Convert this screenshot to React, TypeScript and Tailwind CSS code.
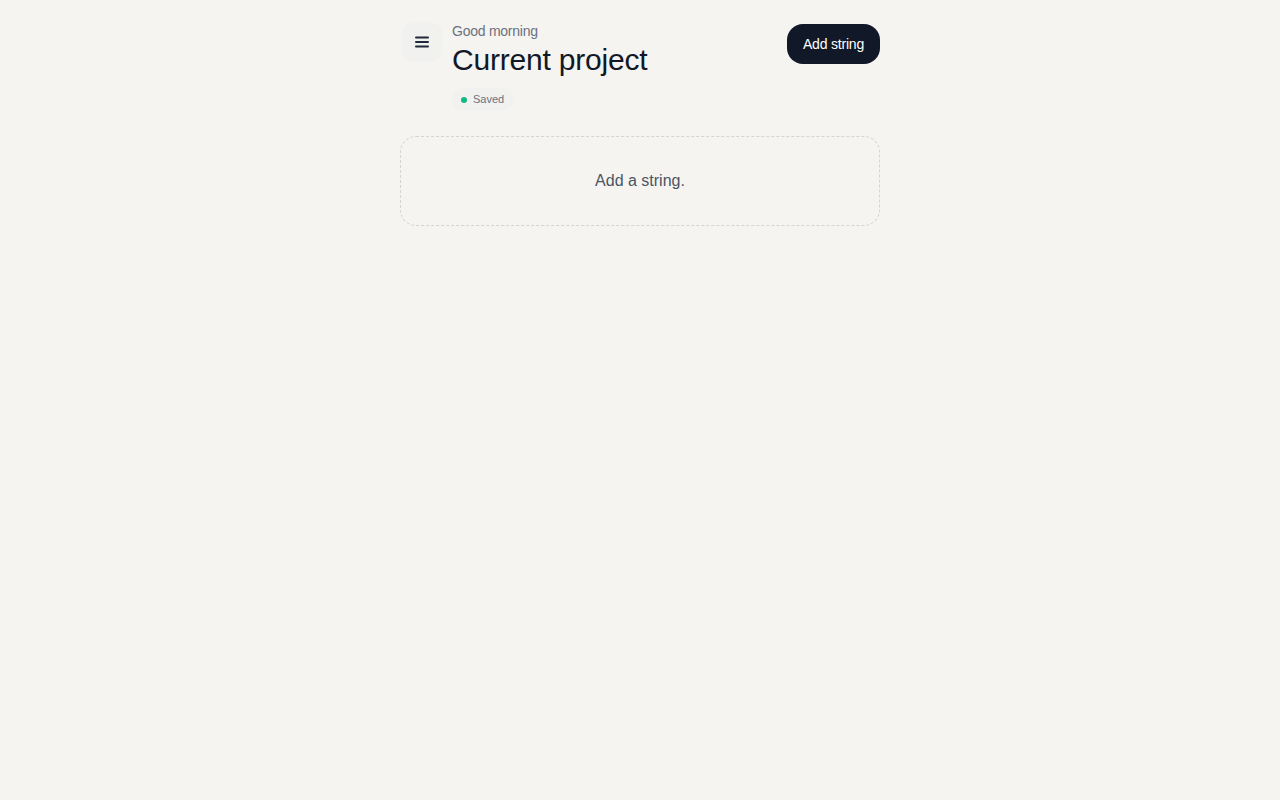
export default function App() {
  return (
    <div
      className="min-h-screen bg-[#f5f4f0] text-[#111827]"
      style={{ fontFamily: '"Liberation Sans", Arial, sans-serif' }}
    >
      <div className="mx-auto w-[480px] pt-[23px]">
        <header className="flex items-start justify-between">
          <div className="flex items-start gap-[10px]">
            <button className="mt-[-1px] ml-[2px] flex h-10 w-10 items-center justify-center rounded-xl bg-[#f1f1f0] text-[#1f2937]">
              <svg width="16" height="16" viewBox="0 0 16 16" fill="none" stroke="currentColor" strokeWidth="2" strokeLinecap="round">
                <line x1="2" y1="3.5" x2="14" y2="3.5" />
                <line x1="2" y1="8" x2="14" y2="8" />
                <line x1="2" y1="12.5" x2="14" y2="12.5" />
              </svg>
            </button>
            <div className="flex flex-col">
              <span className="text-sm leading-4 tracking-[-0.25px] text-[#6b7280]">Good morning</span>
              <h1 className="mt-[3px] text-[30px] leading-9 tracking-[-0.2px] text-[#111827]">
                Current project
              </h1>
              <div className="mt-[10px] flex w-fit items-center gap-[6px] rounded-full bg-[#f1f1ef] px-[9px] py-[5px] text-[11px] leading-[13px] text-[#6b7280]">
                <span className="h-[6px] w-[6px] rounded-full bg-[#10b981]" />
                Saved
              </div>
            </div>
          </div>
          <button className="mt-[1px] h-10 rounded-2xl bg-[#111827] px-4 text-sm tracking-[-0.2px] text-white">
            Add string
          </button>
        </header>

        <main className="mt-[25px]">
          <div className="flex h-[90px] items-center justify-center rounded-2xl border border-dashed border-[#d4d4d0] text-base text-[#4b5563]">
            Add a string.
          </div>
        </main>
      </div>
    </div>
  );
}
